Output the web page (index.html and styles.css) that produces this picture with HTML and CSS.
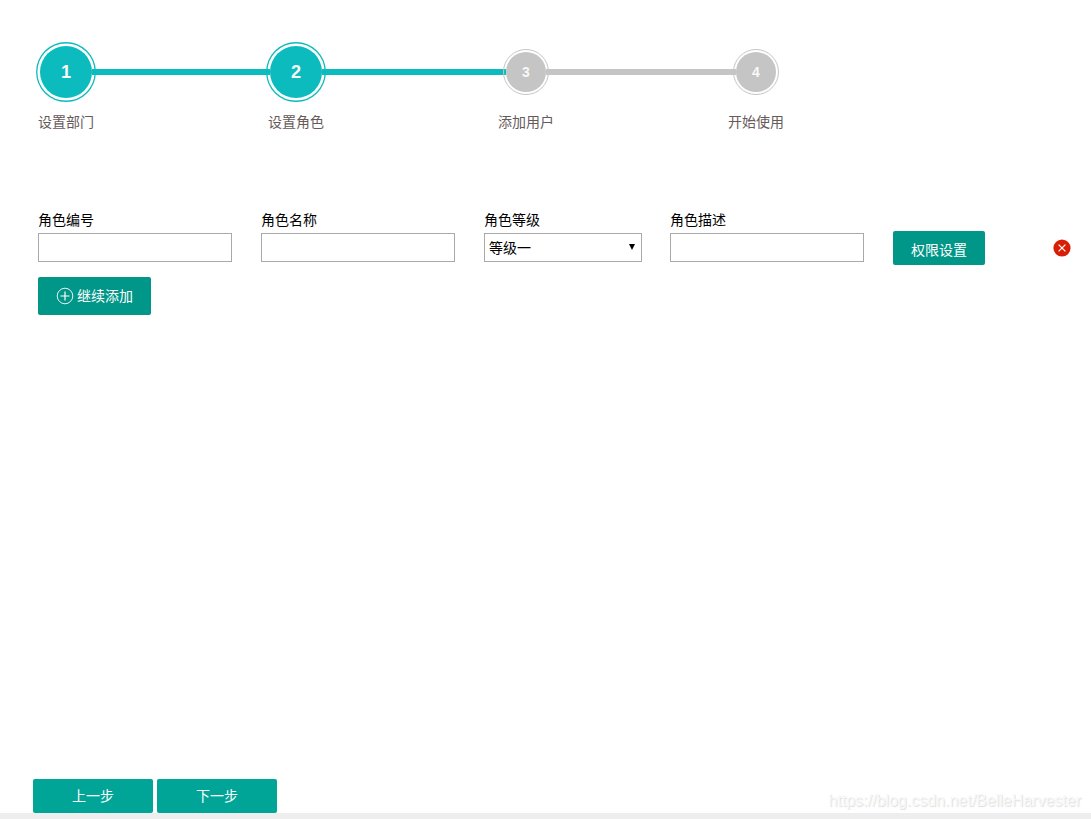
FILE: index.html
```html
<!DOCTYPE html>
<html lang="zh-CN">
<head>
    <meta charset="UTF-8">
    <meta name="viewport" content="width=device-width, initial-scale=1.0">
    <title>设置角色</title>
    <link rel="stylesheet" href="styles.css">
</head>
<body>
    <div class="container">
        <div class="steps">
            <div class="step active">
                <div class="track">
                    <div class="slot"><div class="circle"><span>1</span></div></div>
                    <div class="line"></div>
                </div>
                <p>设置部门</p>
            </div>
            <div class="step active">
                <div class="track">
                    <div class="slot"><div class="circle"><span>2</span></div></div>
                    <div class="line to-small"></div>
                </div>
                <p>设置角色</p>
            </div>
            <div class="step">
                <div class="track">
                    <div class="slot"><div class="circle"><span>3</span></div></div>
                    <div class="line to-small"></div>
                </div>
                <p>添加用户</p>
            </div>
            <div class="step">
                <div class="track">
                    <div class="slot"><div class="circle"><span>4</span></div></div>
                </div>
                <p>开始使用</p>
            </div>
        </div>

        <div class="role-row">
            <div class="field">
                <label for="roleCode">角色编号</label>
                <input type="text" id="roleCode">
            </div>
            <div class="field">
                <label for="roleName">角色名称</label>
                <input type="text" id="roleName">
            </div>
            <div class="field level">
                <label for="roleLevel">角色等级</label>
                <div class="select-box">
                    <select id="roleLevel">
                        <option>等级一</option>
                    </select>
                    <svg class="arrow" width="6" height="6" viewBox="0 0 6 6"><path d="M0 0h6L3 6z" fill="#000"/></svg>
                </div>
            </div>
            <div class="field">
                <label for="roleDesc">角色描述</label>
                <input type="text" id="roleDesc">
            </div>
            <button class="btn auth-btn">权限设置</button>
            <svg class="delete" width="18" height="18" viewBox="0 0 18 18">
                <circle cx="9" cy="9" r="8.6" fill="#d81e06"/>
                <path d="M5.6 5.6l6.8 6.8M12.4 5.6l-6.8 6.8" stroke="#fff" stroke-width="1.2"/>
            </svg>
        </div>

        <button class="btn add-btn">
            <svg width="18" height="18" viewBox="0 0 18 18" fill="none" stroke="#fff">
                <circle cx="9" cy="9" r="7.8" stroke-width="0.9"/>
                <path d="M4.5 9h9M9 4.5v9" stroke-width="1.2"/>
            </svg>
            <span>继续添加</span>
        </button>
    </div>

    <div class="bottom">
        <div class="nav">
            <button class="btn nav-btn">上一步</button>
            <button class="btn nav-btn">下一步</button>
        </div>
        <div class="watermark">https://blog.csdn.net/BelleHarvester</div>
    </div>
</body>
</html>
```

FILE: styles.css
```css
* {
    box-sizing: border-box;
}

body {
    margin: 0;
    height: 100vh;
    display: flex;
    flex-direction: column;
    font-family: "Liberation Sans", "Noto Sans CJK SC", sans-serif;
    font-size: 14px;
    background-color: #fff;
    color: #000;
}

.container {
    flex: 1;
    padding: 42px 20px 0 38px;
}

/* steps */
.steps {
    display: flex;
    margin-left: -2px;
}

.step {
    width: 230px;
}

.track {
    display: flex;
    align-items: center;
    height: 60px;
}

.slot {
    width: 60px;
    display: flex;
    justify-content: center;
    z-index: 1;
}

.circle {
    width: 46px;
    height: 46px;
    padding: 2px;
    border: 1px solid #c5c5c5;
    border-radius: 50%;
}

.circle span {
    display: flex;
    align-items: center;
    justify-content: center;
    width: 100%;
    height: 100%;
    border-radius: 50%;
    background-color: #c5c5c5;
    color: #f8f8f8;
    font-size: 14px;
    font-weight: bold;
}

.active .circle {
    border-color: #0cbbbd;
    transform: scale(1.3);
}

.active .circle span {
    background-color: #0cbbbd;
}

.line {
    flex: 1;
    height: 6px;
    margin: 0 -4px;
    background-color: #c5c5c5;
}

.active .line {
    background-color: #0cbbbd;
}

.line.to-small {
    margin-right: -10px;
}

.step:not(.active) .line {
    margin-left: -10px;
}

.step p {
    width: 60px;
    margin: 10px 0 0;
    line-height: 20px;
    text-align: center;
    color: #665a5a;
}

/* role form */
.role-row {
    display: flex;
    align-items: flex-end;
    margin-top: 78px;
}

.field {
    width: 194px;
    margin-right: 29px;
}

.field.level {
    width: 158px;
    margin-right: 28px;
}

.field label {
    display: block;
    height: 20px;
    line-height: 20px;
    margin-bottom: 3px;
}

.field input,
.field select {
    display: block;
    width: 100%;
    height: 29px;
    padding: 0 4px;
    border: 1px solid #a9a9a9;
    border-radius: 0;
    background-color: #fff;
    color: #000;
    font: inherit;
    appearance: none;
}

.select-box {
    position: relative;
}

.arrow {
    position: absolute;
    right: 7px;
    top: 11px;
}

.btn {
    border: none;
    border-radius: 2px;
    padding: 0 0 2px;
    background-color: #009688;
    color: #fff;
    font: inherit;
    cursor: pointer;
}

.auth-btn {
    width: 92px;
    height: 34px;
    padding: 1px 0 0;
    margin-bottom: -3px;
}

.delete {
    margin-left: auto;
    margin-bottom: 5px;
}

.add-btn {
    display: flex;
    align-items: center;
    justify-content: center;
    gap: 3px;
    width: 113px;
    height: 38px;
    padding: 0;
    margin-top: 15px;
}

.add-btn span {
    padding-bottom: 2px;
}

/* bottom bar */
.bottom {
    display: flex;
    justify-content: space-between;
    align-items: flex-end;
    padding: 0 10px 0 33px;
    border-bottom: 6px solid #eee;
}

.nav {
    display: flex;
    gap: 4px;
}

.nav-btn {
    width: 120px;
    height: 34px;
    background-color: #00a597;
}

.watermark {
    font-size: 16px;
    line-height: 18px;
    margin-bottom: 3px;
    color: #f8f8f8;
    text-shadow: 1px 1px 1px #ddd;
}
```
